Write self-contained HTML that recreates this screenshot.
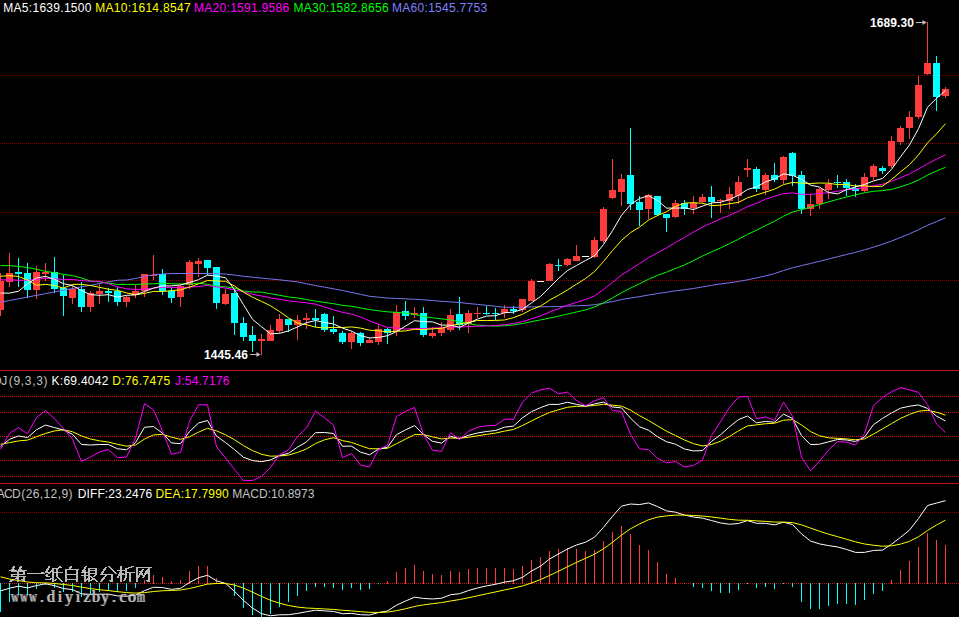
<!DOCTYPE html>
<html><head><meta charset="utf-8"><style>
html,body{margin:0;padding:0;background:#000;width:959px;height:617px;overflow:hidden;position:relative}
.lg{position:absolute;font-family:"Liberation Sans",sans-serif;font-size:12px;line-height:20px;white-space:pre}
</style></head><body>
<svg width="959" height="617" viewBox="0 0 959 617" style="position:absolute;left:0;top:0"><line x1="0" y1="75.5" x2="959" y2="75.5" stroke="#8c0000" stroke-width="1" stroke-dasharray="1 1"/><line x1="0" y1="143.5" x2="959" y2="143.5" stroke="#8c0000" stroke-width="1" stroke-dasharray="1 1"/><line x1="0" y1="212.5" x2="959" y2="212.5" stroke="#8c0000" stroke-width="1" stroke-dasharray="1 1"/><line x1="0" y1="280.5" x2="959" y2="280.5" stroke="#8c0000" stroke-width="1" stroke-dasharray="1 1"/><line x1="0" y1="396.5" x2="959" y2="396.5" stroke="#c81410" stroke-width="1" stroke-dasharray="1 1"/><line x1="0" y1="412.5" x2="959" y2="412.5" stroke="#c81410" stroke-width="1" stroke-dasharray="1 1"/><line x1="0" y1="436.5" x2="959" y2="436.5" stroke="#c81410" stroke-width="1" stroke-dasharray="1 1"/><line x1="0" y1="460.5" x2="959" y2="460.5" stroke="#c81410" stroke-width="1" stroke-dasharray="1 1"/><line x1="0" y1="476.5" x2="959" y2="476.5" stroke="#c81410" stroke-width="1" stroke-dasharray="1 1"/><line x1="0" y1="512.5" x2="959" y2="512.5" stroke="#8c0000" stroke-width="1" stroke-dasharray="1 1"/><line x1="0" y1="583.5" x2="959" y2="583.5" stroke="#c81410" stroke-width="1" stroke-dasharray="1 1"/><rect x="0" y="370" width="959" height="1" fill="#c81410"/><rect x="0" y="483" width="959" height="1" fill="#c81410"/><g shape-rendering="crispEdges"><rect x="0" y="273" width="1" height="43" fill="#ff3c3c"/><rect x="-3" y="281" width="7" height="29" fill="#ff3c3c"/><rect x="9" y="253" width="1" height="34" fill="#ff3c3c"/><rect x="6" y="273" width="7" height="9" fill="#ff3c3c"/><rect x="18" y="258" width="1" height="29" fill="#00ffff"/><rect x="15" y="272" width="7" height="2" fill="#00ffff"/><rect x="27" y="263" width="1" height="35" fill="#00ffff"/><rect x="24" y="273" width="7" height="17" fill="#00ffff"/><rect x="36" y="266" width="1" height="33" fill="#ff3c3c"/><rect x="33" y="272" width="7" height="18" fill="#ff3c3c"/><rect x="45" y="263" width="1" height="18" fill="#ff3c3c"/><rect x="42" y="272" width="7" height="2" fill="#ff3c3c"/><rect x="54" y="257" width="1" height="36" fill="#00ffff"/><rect x="51" y="272" width="7" height="17" fill="#00ffff"/><rect x="63" y="275" width="1" height="41" fill="#00ffff"/><rect x="60" y="288" width="7" height="8" fill="#00ffff"/><rect x="72" y="285" width="1" height="19" fill="#ff3c3c"/><rect x="69" y="289" width="7" height="9" fill="#ff3c3c"/><rect x="81" y="282" width="1" height="30" fill="#00ffff"/><rect x="78" y="289" width="7" height="18" fill="#00ffff"/><rect x="90" y="291" width="1" height="21" fill="#ff3c3c"/><rect x="87" y="293" width="7" height="14" fill="#ff3c3c"/><rect x="99" y="284" width="1" height="20" fill="#ff3c3c"/><rect x="96" y="291" width="7" height="3" fill="#ff3c3c"/><rect x="108" y="288" width="1" height="14" fill="#00ffff"/><rect x="105" y="291" width="7" height="2" fill="#00ffff"/><rect x="117" y="287" width="1" height="19" fill="#00ffff"/><rect x="114" y="291" width="7" height="11" fill="#00ffff"/><rect x="126" y="296" width="1" height="11" fill="#ff3c3c"/><rect x="123" y="297" width="7" height="5" fill="#ff3c3c"/><rect x="135" y="285" width="1" height="13" fill="#ff3c3c"/><rect x="132" y="291" width="7" height="4" fill="#ff3c3c"/><rect x="144" y="274" width="1" height="23" fill="#ff3c3c"/><rect x="141" y="274" width="7" height="17" fill="#ff3c3c"/><rect x="153" y="255" width="1" height="25" fill="#ff3c3c"/><rect x="150" y="275" width="7" height="1" fill="#ff3c3c"/><rect x="162" y="269" width="1" height="26" fill="#00ffff"/><rect x="159" y="274" width="7" height="17" fill="#00ffff"/><rect x="171" y="288" width="1" height="15" fill="#00ffff"/><rect x="168" y="291" width="7" height="7" fill="#00ffff"/><rect x="180" y="285" width="1" height="22" fill="#ff3c3c"/><rect x="177" y="286" width="7" height="11" fill="#ff3c3c"/><rect x="189" y="260" width="1" height="29" fill="#ff3c3c"/><rect x="186" y="262" width="7" height="23" fill="#ff3c3c"/><rect x="198" y="258" width="1" height="19" fill="#ff3c3c"/><rect x="195" y="261" width="7" height="3" fill="#ff3c3c"/><rect x="207" y="260" width="1" height="15" fill="#00ffff"/><rect x="204" y="260" width="7" height="8" fill="#00ffff"/><rect x="216" y="267" width="1" height="42" fill="#00ffff"/><rect x="213" y="267" width="7" height="36" fill="#00ffff"/><rect x="225" y="289" width="1" height="16" fill="#ff3c3c"/><rect x="222" y="294" width="7" height="10" fill="#ff3c3c"/><rect x="234" y="290" width="1" height="45" fill="#00ffff"/><rect x="231" y="293" width="7" height="30" fill="#00ffff"/><rect x="243" y="317" width="1" height="24" fill="#00ffff"/><rect x="240" y="323" width="7" height="14" fill="#00ffff"/><rect x="252" y="326" width="1" height="26" fill="#00ffff"/><rect x="249" y="335" width="7" height="6" fill="#00ffff"/><rect x="261" y="334" width="1" height="21" fill="#ff3c3c"/><rect x="258" y="339" width="7" height="2" fill="#ff3c3c"/><rect x="270" y="325" width="1" height="16" fill="#ff3c3c"/><rect x="267" y="330" width="7" height="11" fill="#ff3c3c"/><rect x="279" y="314" width="1" height="19" fill="#ff3c3c"/><rect x="276" y="319" width="7" height="12" fill="#ff3c3c"/><rect x="288" y="319" width="1" height="13" fill="#00ffff"/><rect x="285" y="319" width="7" height="6" fill="#00ffff"/><rect x="297" y="315" width="1" height="25" fill="#ff3c3c"/><rect x="294" y="320" width="7" height="5" fill="#ff3c3c"/><rect x="306" y="313" width="1" height="16" fill="#ff3c3c"/><rect x="303" y="318" width="7" height="2" fill="#ff3c3c"/><rect x="315" y="309" width="1" height="18" fill="#00ffff"/><rect x="312" y="318" width="7" height="2" fill="#00ffff"/><rect x="324" y="313" width="1" height="19" fill="#00ffff"/><rect x="321" y="314" width="7" height="16" fill="#00ffff"/><rect x="333" y="316" width="1" height="18" fill="#00ffff"/><rect x="330" y="329" width="7" height="3" fill="#00ffff"/><rect x="342" y="331" width="1" height="13" fill="#00ffff"/><rect x="339" y="333" width="7" height="9" fill="#00ffff"/><rect x="351" y="331" width="1" height="18" fill="#ff3c3c"/><rect x="348" y="333" width="7" height="9" fill="#ff3c3c"/><rect x="360" y="332" width="1" height="14" fill="#00ffff"/><rect x="357" y="333" width="7" height="10" fill="#00ffff"/><rect x="369" y="338" width="1" height="5" fill="#ff3c3c"/><rect x="366" y="340" width="7" height="3" fill="#ff3c3c"/><rect x="378" y="324" width="1" height="21" fill="#ff3c3c"/><rect x="375" y="329" width="7" height="13" fill="#ff3c3c"/><rect x="387" y="328" width="1" height="16" fill="#00ffff"/><rect x="384" y="329" width="7" height="4" fill="#00ffff"/><rect x="396" y="305" width="1" height="31" fill="#ff3c3c"/><rect x="393" y="312" width="7" height="19" fill="#ff3c3c"/><rect x="405" y="301" width="1" height="19" fill="#00ffff"/><rect x="402" y="311" width="7" height="5" fill="#00ffff"/><rect x="414" y="307" width="1" height="11" fill="#ff3c3c"/><rect x="411" y="313" width="7" height="2" fill="#ff3c3c"/><rect x="423" y="307" width="1" height="30" fill="#00ffff"/><rect x="420" y="313" width="7" height="22" fill="#00ffff"/><rect x="432" y="327" width="1" height="11" fill="#ff3c3c"/><rect x="429" y="333" width="7" height="3" fill="#ff3c3c"/><rect x="441" y="322" width="1" height="14" fill="#ff3c3c"/><rect x="438" y="328" width="7" height="5" fill="#ff3c3c"/><rect x="450" y="309" width="1" height="23" fill="#ff3c3c"/><rect x="447" y="315" width="7" height="15" fill="#ff3c3c"/><rect x="459" y="297" width="1" height="33" fill="#00ffff"/><rect x="456" y="314" width="7" height="11" fill="#00ffff"/><rect x="468" y="310" width="1" height="23" fill="#ff3c3c"/><rect x="465" y="313" width="7" height="11" fill="#ff3c3c"/><rect x="477" y="307" width="1" height="11" fill="#ff3c3c"/><rect x="474" y="313" width="7" height="1" fill="#ff3c3c"/><rect x="486" y="306" width="1" height="9" fill="#00ffff"/><rect x="483" y="313" width="7" height="1" fill="#00ffff"/><rect x="495" y="308" width="1" height="12" fill="#00ffff"/><rect x="492" y="313" width="7" height="1" fill="#00ffff"/><rect x="504" y="305" width="1" height="13" fill="#ff3c3c"/><rect x="501" y="309" width="7" height="4" fill="#ff3c3c"/><rect x="513" y="306" width="1" height="8" fill="#00ffff"/><rect x="510" y="309" width="7" height="2" fill="#00ffff"/><rect x="522" y="299" width="1" height="13" fill="#ff3c3c"/><rect x="519" y="299" width="7" height="11" fill="#ff3c3c"/><rect x="531" y="279" width="1" height="22" fill="#ff3c3c"/><rect x="528" y="281" width="7" height="20" fill="#ff3c3c"/><rect x="540" y="281" width="1" height="1" fill="#ffffff"/><rect x="537" y="281" width="7" height="1" fill="#ffffff"/><rect x="549" y="263" width="1" height="18" fill="#ff3c3c"/><rect x="546" y="264" width="7" height="17" fill="#ff3c3c"/><rect x="558" y="259" width="1" height="12" fill="#00ffff"/><rect x="555" y="265" width="7" height="1" fill="#00ffff"/><rect x="567" y="258" width="1" height="8" fill="#ff3c3c"/><rect x="564" y="259" width="7" height="6" fill="#ff3c3c"/><rect x="576" y="245" width="1" height="16" fill="#ff3c3c"/><rect x="573" y="256" width="7" height="5" fill="#ff3c3c"/><rect x="585" y="256" width="1" height="1" fill="#ffffff"/><rect x="582" y="256" width="7" height="1" fill="#ffffff"/><rect x="594" y="237" width="1" height="21" fill="#ff3c3c"/><rect x="591" y="240" width="7" height="17" fill="#ff3c3c"/><rect x="603" y="207" width="1" height="36" fill="#ff3c3c"/><rect x="600" y="209" width="7" height="32" fill="#ff3c3c"/><rect x="612" y="159" width="1" height="40" fill="#ff3c3c"/><rect x="609" y="190" width="7" height="8" fill="#ff3c3c"/><rect x="621" y="174" width="1" height="32" fill="#ff3c3c"/><rect x="618" y="179" width="7" height="13" fill="#ff3c3c"/><rect x="630" y="128" width="1" height="82" fill="#00ffff"/><rect x="627" y="175" width="7" height="29" fill="#00ffff"/><rect x="639" y="196" width="1" height="30" fill="#00ffff"/><rect x="636" y="202" width="7" height="8" fill="#00ffff"/><rect x="648" y="194" width="1" height="25" fill="#ff3c3c"/><rect x="645" y="195" width="7" height="14" fill="#ff3c3c"/><rect x="657" y="196" width="1" height="20" fill="#00ffff"/><rect x="654" y="196" width="7" height="19" fill="#00ffff"/><rect x="666" y="214" width="1" height="18" fill="#00ffff"/><rect x="663" y="214" width="7" height="4" fill="#00ffff"/><rect x="675" y="200" width="1" height="18" fill="#ff3c3c"/><rect x="672" y="203" width="7" height="14" fill="#ff3c3c"/><rect x="684" y="200" width="1" height="15" fill="#00ffff"/><rect x="681" y="203" width="7" height="6" fill="#00ffff"/><rect x="693" y="196" width="1" height="18" fill="#ff3c3c"/><rect x="690" y="203" width="7" height="5" fill="#ff3c3c"/><rect x="702" y="194" width="1" height="9" fill="#ff3c3c"/><rect x="699" y="197" width="7" height="5" fill="#ff3c3c"/><rect x="711" y="186" width="1" height="32" fill="#00ffff"/><rect x="708" y="197" width="7" height="5" fill="#00ffff"/><rect x="720" y="199" width="1" height="14" fill="#ff3c3c"/><rect x="717" y="200" width="7" height="1" fill="#ff3c3c"/><rect x="729" y="187" width="1" height="22" fill="#ff3c3c"/><rect x="726" y="194" width="7" height="7" fill="#ff3c3c"/><rect x="738" y="176" width="1" height="28" fill="#ff3c3c"/><rect x="735" y="182" width="7" height="14" fill="#ff3c3c"/><rect x="747" y="159" width="1" height="18" fill="#ff3c3c"/><rect x="744" y="168" width="7" height="2" fill="#ff3c3c"/><rect x="756" y="167" width="1" height="25" fill="#00ffff"/><rect x="753" y="169" width="7" height="20" fill="#00ffff"/><rect x="765" y="173" width="1" height="22" fill="#ff3c3c"/><rect x="762" y="175" width="7" height="15" fill="#ff3c3c"/><rect x="774" y="163" width="1" height="19" fill="#00ffff"/><rect x="771" y="175" width="7" height="5" fill="#00ffff"/><rect x="783" y="156" width="1" height="28" fill="#ff3c3c"/><rect x="780" y="157" width="7" height="23" fill="#ff3c3c"/><rect x="792" y="152" width="1" height="34" fill="#00ffff"/><rect x="789" y="153" width="7" height="23" fill="#00ffff"/><rect x="801" y="171" width="1" height="43" fill="#00ffff"/><rect x="798" y="175" width="7" height="34" fill="#00ffff"/><rect x="810" y="194" width="1" height="22" fill="#ff3c3c"/><rect x="807" y="204" width="7" height="5" fill="#ff3c3c"/><rect x="819" y="188" width="1" height="21" fill="#ff3c3c"/><rect x="816" y="189" width="7" height="15" fill="#ff3c3c"/><rect x="828" y="179" width="1" height="20" fill="#ff3c3c"/><rect x="825" y="184" width="7" height="6" fill="#ff3c3c"/><rect x="837" y="175" width="1" height="13" fill="#00ffff"/><rect x="834" y="182" width="7" height="1" fill="#00ffff"/><rect x="846" y="179" width="1" height="17" fill="#00ffff"/><rect x="843" y="182" width="7" height="6" fill="#00ffff"/><rect x="855" y="184" width="1" height="13" fill="#00ffff"/><rect x="852" y="188" width="7" height="3" fill="#00ffff"/><rect x="864" y="173" width="1" height="19" fill="#ff3c3c"/><rect x="861" y="177" width="7" height="14" fill="#ff3c3c"/><rect x="873" y="164" width="1" height="16" fill="#ff3c3c"/><rect x="870" y="166" width="7" height="11" fill="#ff3c3c"/><rect x="882" y="166" width="1" height="8" fill="#00ffff"/><rect x="879" y="168" width="7" height="3" fill="#00ffff"/><rect x="891" y="136" width="1" height="32" fill="#ff3c3c"/><rect x="888" y="141" width="7" height="25" fill="#ff3c3c"/><rect x="900" y="126" width="1" height="19" fill="#ff3c3c"/><rect x="897" y="128" width="7" height="14" fill="#ff3c3c"/><rect x="909" y="111" width="1" height="28" fill="#ff3c3c"/><rect x="906" y="117" width="7" height="11" fill="#ff3c3c"/><rect x="918" y="76" width="1" height="43" fill="#ff3c3c"/><rect x="915" y="85" width="7" height="32" fill="#ff3c3c"/><rect x="927" y="22" width="1" height="53" fill="#ff3c3c"/><rect x="924" y="63" width="7" height="11" fill="#ff3c3c"/><rect x="936" y="56" width="1" height="55" fill="#00ffff"/><rect x="933" y="63" width="7" height="34" fill="#00ffff"/><rect x="945" y="87" width="1" height="11" fill="#ff3c3c"/><rect x="942" y="89" width="7" height="7" fill="#ff3c3c"/></g><polyline fill="none" stroke="#7878f0" stroke-width="1" points="0.5,302.25 9.5,300.52 18.5,298.80 27.5,297.07 36.5,295.35 45.5,293.62 54.5,291.90 63.5,290.23 72.5,288.57 81.5,286.90 90.5,285.24 99.5,283.57 108.5,281.91 117.5,280.25 126.5,280.00 135.5,278.50 144.5,276.25 153.5,274.75 162.5,274.00 171.5,273.50 180.5,273.50 189.5,273.50 198.5,273.50 207.5,273.50 216.5,273.75 225.5,274.00 234.5,275.15 243.5,276.30 252.5,277.20 261.5,278.10 270.5,278.95 279.5,279.80 288.5,280.85 297.5,281.90 306.5,283.75 315.5,285.60 324.5,287.20 333.5,288.80 342.5,290.50 351.5,292.43 360.5,294.37 369.5,296.30 378.5,297.20 387.5,298.10 396.5,298.45 405.5,298.80 414.5,299.30 423.5,299.80 432.5,300.55 441.5,301.30 450.5,301.90 459.5,302.50 468.5,303.50 477.5,304.40 486.5,305.30 495.5,306.30 504.5,307.30 513.5,307.30 522.5,307.30 531.5,306.83 540.5,306.83 549.5,306.68 558.5,306.55 567.5,306.05 576.5,305.78 585.5,305.52 594.5,304.72 603.5,303.28 612.5,301.63 621.5,299.52 630.5,298.02 639.5,296.65 648.5,295.03 657.5,293.58 666.5,292.25 675.5,290.78 684.5,289.68 693.5,288.48 702.5,286.93 711.5,285.33 720.5,283.90 729.5,282.77 738.5,281.45 747.5,279.80 756.5,277.90 765.5,275.92 774.5,273.53 783.5,270.55 792.5,267.80 801.5,265.62 810.5,263.52 819.5,261.35 828.5,259.02 837.5,256.72 846.5,254.53 855.5,252.38 864.5,249.85 873.5,247.10 882.5,244.25 891.5,241.05 900.5,237.48 909.5,233.77 918.5,229.70 927.5,225.22 936.5,221.62 945.5,217.85"/><polyline fill="none" stroke="#00ff00" stroke-width="1" points="0.5,265.60 9.5,265.60 18.5,266.50 27.5,267.50 36.5,269.40 45.5,271.25 54.5,272.75 63.5,274.40 72.5,275.60 81.5,278.00 90.5,281.00 99.5,281.90 108.5,283.10 117.5,284.40 126.5,284.40 135.5,284.40 144.5,284.00 153.5,283.75 162.5,283.10 171.5,283.75 180.5,284.00 189.5,284.00 198.5,283.10 207.5,284.40 216.5,286.00 225.5,286.90 234.5,288.10 243.5,291.00 252.5,292.00 261.5,292.10 270.5,293.73 279.5,295.27 288.5,296.97 297.5,298.00 306.5,299.53 315.5,301.10 324.5,302.47 333.5,303.67 342.5,305.40 351.5,306.30 360.5,307.93 369.5,309.57 378.5,310.80 387.5,311.83 396.5,312.33 405.5,313.13 414.5,314.43 423.5,316.40 432.5,317.83 441.5,318.87 450.5,319.83 459.5,321.90 468.5,323.63 477.5,325.17 486.5,325.53 495.5,326.17 504.5,325.73 513.5,324.87 522.5,323.50 531.5,321.57 540.5,319.93 549.5,318.10 558.5,316.13 567.5,314.10 576.5,312.03 585.5,309.93 594.5,306.97 603.5,302.90 612.5,297.87 621.5,292.73 630.5,288.10 639.5,283.73 648.5,279.27 657.5,275.33 666.5,272.17 675.5,268.43 684.5,264.93 693.5,260.57 702.5,256.03 711.5,251.80 720.5,247.97 729.5,243.63 738.5,239.27 747.5,234.43 756.5,230.27 765.5,225.67 774.5,221.33 783.5,216.23 792.5,212.10 801.5,209.67 810.5,207.10 819.5,204.60 828.5,201.90 837.5,199.33 846.5,197.03 855.5,194.83 864.5,192.73 873.5,191.30 882.5,190.63 891.5,189.37 900.5,186.87 909.5,183.80 918.5,180.13 927.5,175.10 936.5,171.07 945.5,167.27"/><polyline fill="none" stroke="#ff00ff" stroke-width="1" points="0.5,279.75 9.5,280.00 18.5,280.25 27.5,280.25 36.5,279.40 45.5,278.10 54.5,279.00 63.5,279.40 72.5,279.40 81.5,280.60 90.5,281.25 99.5,281.25 108.5,283.75 117.5,286.90 126.5,288.75 135.5,289.40 144.5,289.10 153.5,288.10 162.5,287.25 171.5,287.45 180.5,287.70 189.5,287.15 198.5,286.55 207.5,285.45 216.5,286.95 225.5,288.05 234.5,289.75 243.5,291.80 252.5,294.35 261.5,296.00 270.5,297.85 279.5,299.25 288.5,300.85 297.5,301.80 306.5,302.85 315.5,304.25 324.5,307.00 333.5,309.80 342.5,312.35 351.5,314.15 360.5,316.95 369.5,320.85 378.5,324.25 387.5,327.50 396.5,328.00 405.5,329.05 414.5,328.60 423.5,328.50 432.5,328.15 441.5,327.60 450.5,326.85 459.5,327.10 468.5,326.55 477.5,326.20 486.5,325.95 495.5,325.65 504.5,324.65 513.5,323.60 522.5,321.50 531.5,318.90 540.5,315.85 549.5,312.05 558.5,308.85 567.5,305.20 576.5,302.40 585.5,299.45 594.5,295.80 603.5,289.55 612.5,282.40 621.5,274.95 630.5,269.35 639.5,263.60 648.5,257.70 657.5,252.75 666.5,247.95 675.5,242.45 684.5,237.40 693.5,232.05 702.5,226.95 711.5,222.95 720.5,218.90 729.5,215.40 738.5,211.25 747.5,206.70 756.5,203.30 765.5,199.25 774.5,196.20 783.5,193.60 792.5,192.85 801.5,194.30 810.5,194.35 819.5,193.35 828.5,192.80 837.5,191.20 846.5,189.70 855.5,189.05 864.5,187.50 873.5,185.65 882.5,184.30 891.5,181.30 900.5,177.70 909.5,173.85 918.5,169.00 927.5,163.75 936.5,159.15 945.5,154.85"/><polyline fill="none" stroke="#ffff00" stroke-width="1" points="0.5,276.25 9.5,275.60 18.5,276.50 27.5,280.00 36.5,285.25 45.5,284.40 54.5,285.60 63.5,288.10 72.5,284.40 81.5,284.30 90.5,285.50 99.5,287.30 108.5,289.20 117.5,290.40 126.5,292.90 135.5,294.80 144.5,293.40 153.5,291.40 162.5,291.50 171.5,290.60 180.5,289.90 189.5,287.00 198.5,283.90 207.5,280.50 216.5,281.00 225.5,281.30 234.5,286.10 243.5,292.20 252.5,297.20 261.5,301.40 270.5,305.80 279.5,311.50 288.5,317.80 297.5,323.10 306.5,324.70 315.5,327.20 324.5,327.90 333.5,327.40 342.5,327.50 351.5,326.90 360.5,328.10 369.5,330.20 378.5,330.70 387.5,331.90 396.5,331.30 405.5,330.90 414.5,329.30 423.5,329.60 432.5,328.80 441.5,328.30 450.5,325.60 459.5,324.00 468.5,322.40 477.5,320.50 486.5,320.60 495.5,320.40 504.5,320.00 513.5,317.60 522.5,314.20 531.5,309.50 540.5,306.10 549.5,300.10 558.5,295.30 567.5,289.90 576.5,284.20 585.5,278.50 594.5,271.60 603.5,261.50 612.5,250.60 621.5,240.40 630.5,232.60 639.5,227.10 648.5,220.10 657.5,215.60 666.5,211.70 675.5,206.40 684.5,203.20 693.5,202.60 702.5,203.30 711.5,205.50 720.5,205.20 729.5,203.70 738.5,202.40 747.5,197.80 756.5,194.90 765.5,192.10 774.5,189.20 783.5,184.60 792.5,182.40 801.5,183.10 810.5,183.50 819.5,183.00 828.5,183.20 837.5,184.60 846.5,184.50 855.5,186.00 864.5,185.80 873.5,186.70 882.5,186.20 891.5,179.50 900.5,171.90 909.5,164.70 918.5,154.80 927.5,142.90 936.5,133.80 945.5,123.70"/><polyline fill="none" stroke="#ffffff" stroke-width="1" points="0.5,293.10 9.5,293.10 18.5,291.25 27.5,283.75 36.5,278.10 45.5,276.30 54.5,279.30 63.5,283.70 72.5,285.60 81.5,290.50 90.5,294.70 99.5,295.30 108.5,294.70 117.5,297.10 126.5,295.30 135.5,294.90 144.5,291.50 153.5,288.10 162.5,285.90 171.5,285.90 180.5,284.90 189.5,282.50 198.5,279.70 207.5,275.10 216.5,276.10 225.5,277.70 234.5,289.70 243.5,304.70 252.5,319.30 261.5,326.70 270.5,333.90 279.5,333.30 288.5,330.90 297.5,326.90 306.5,322.70 315.5,320.50 324.5,322.50 333.5,323.90 342.5,328.10 351.5,331.10 360.5,335.70 369.5,337.90 378.5,337.50 387.5,335.70 396.5,331.50 405.5,326.10 414.5,320.70 423.5,321.70 432.5,321.90 441.5,325.10 450.5,325.10 459.5,327.30 468.5,323.10 477.5,319.10 486.5,316.10 495.5,315.70 504.5,312.70 513.5,312.10 522.5,309.30 531.5,302.90 540.5,296.50 549.5,287.50 558.5,278.50 567.5,270.50 576.5,265.50 585.5,260.50 594.5,255.70 603.5,244.50 612.5,230.70 621.5,215.30 630.5,204.70 639.5,198.50 648.5,195.70 657.5,200.50 666.5,208.10 675.5,208.10 684.5,207.90 693.5,209.50 702.5,206.10 711.5,202.90 720.5,202.30 729.5,199.50 738.5,195.30 747.5,189.50 756.5,186.90 765.5,181.90 774.5,178.90 783.5,173.90 792.5,175.30 801.5,179.30 810.5,185.10 819.5,187.10 828.5,192.50 837.5,193.90 846.5,189.70 855.5,186.90 864.5,184.50 873.5,180.90 882.5,178.50 891.5,169.30 900.5,156.90 909.5,144.90 918.5,128.70 927.5,107.30 936.5,98.30 945.5,90.50"/><rect x="250" y="354" width="10" height="1" fill="#c0c0c0"/><path d="M256.5 352 L260.5 354.5 L256.5 357 Z" fill="#c0c0c0"/><rect x="916" y="22" width="10" height="1" fill="#c0c0c0"/><path d="M922.5 20 L926.5 22.5 L922.5 25 Z" fill="#c0c0c0"/><svg x="0" y="371" width="959" height="112" viewBox="0 371 959 112" overflow="hidden"><polyline fill="none" stroke="#ffff00" points="0.5,444.27 9.5,442.60 18.5,440.93 27.5,440.10 36.5,436.76 45.5,433.42 54.5,430.92 63.5,429.75 72.5,431.75 81.5,435.99 90.5,439.00 99.5,440.83 108.5,442.08 117.5,444.32 126.5,446.13 135.5,444.97 144.5,439.07 153.5,434.90 162.5,434.33 171.5,437.19 180.5,439.35 189.5,436.77 198.5,432.19 207.5,428.28 216.5,430.90 225.5,434.78 234.5,439.73 243.5,445.59 252.5,450.57 261.5,454.28 270.5,456.18 279.5,455.97 288.5,455.09 297.5,452.43 306.5,448.92 315.5,443.51 324.5,439.84 333.5,437.73 342.5,440.58 351.5,442.42 360.5,445.66 369.5,448.70 378.5,448.81 387.5,448.29 396.5,443.75 405.5,439.13 414.5,434.61 423.5,434.61 432.5,436.84 441.5,438.93 450.5,438.04 459.5,438.24 468.5,437.25 477.5,435.84 486.5,434.40 495.5,433.10 504.5,431.12 513.5,429.44 522.5,425.54 531.5,420.91 540.5,416.48 549.5,412.45 558.5,409.77 567.5,407.26 576.5,406.30 585.5,406.22 594.5,405.47 603.5,404.33 612.5,405.21 621.5,406.10 630.5,410.13 639.5,415.66 648.5,420.50 657.5,425.91 666.5,431.18 675.5,435.52 684.5,440.01 693.5,443.65 702.5,445.98 711.5,444.48 720.5,441.25 729.5,436.42 738.5,430.81 747.5,425.88 756.5,424.87 765.5,423.72 774.5,423.25 783.5,420.22 792.5,419.64 801.5,424.97 810.5,431.52 819.5,435.75 828.5,437.79 837.5,438.34 846.5,438.87 855.5,439.77 864.5,438.88 873.5,434.13 882.5,428.88 891.5,423.57 900.5,418.45 909.5,414.36 918.5,411.22 927.5,410.29 936.5,412.23 945.5,415.14"/><polyline fill="none" stroke="#ffffff" points="0.5,446.78 9.5,439.27 18.5,435.93 27.5,437.60 36.5,429.75 45.5,425.08 54.5,427.58 63.5,430.08 72.5,434.26 81.5,444.47 90.5,445.03 99.5,444.49 108.5,444.58 117.5,448.78 126.5,449.75 135.5,442.66 144.5,427.28 153.5,426.54 162.5,433.19 171.5,442.92 180.5,443.66 189.5,431.60 198.5,423.04 207.5,420.47 216.5,436.12 225.5,442.54 234.5,449.65 243.5,457.30 252.5,460.54 261.5,461.70 270.5,459.96 279.5,455.55 288.5,453.34 297.5,447.11 306.5,441.91 315.5,432.70 324.5,432.48 333.5,433.53 342.5,446.28 351.5,446.10 360.5,452.13 369.5,454.78 378.5,449.03 387.5,447.25 396.5,434.67 405.5,429.89 414.5,425.57 423.5,434.60 432.5,441.30 441.5,443.11 450.5,436.25 459.5,438.66 468.5,435.27 477.5,433.01 486.5,431.51 495.5,430.51 504.5,427.17 513.5,426.07 522.5,417.74 531.5,411.66 540.5,407.62 549.5,404.39 558.5,404.42 567.5,402.22 576.5,404.39 585.5,406.07 594.5,403.96 603.5,402.05 612.5,406.97 621.5,407.89 630.5,418.18 639.5,426.72 648.5,430.18 657.5,436.73 666.5,441.72 675.5,444.19 684.5,449.01 693.5,450.92 702.5,450.64 711.5,441.49 720.5,434.79 729.5,426.77 738.5,419.59 747.5,416.03 756.5,422.85 765.5,421.42 774.5,422.31 783.5,414.14 792.5,418.49 801.5,435.64 810.5,444.60 819.5,444.23 828.5,441.86 837.5,439.44 846.5,439.94 855.5,441.55 864.5,437.11 873.5,424.62 882.5,418.38 891.5,412.94 900.5,408.20 909.5,406.18 918.5,404.96 927.5,408.42 936.5,416.12 945.5,420.96"/><polyline fill="none" stroke="#ff00ff" points="0.5,449.28 9.5,433.42 18.5,427.58 27.5,433.76 36.5,417.56 45.5,410.55 54.5,418.73 63.5,428.41 72.5,439.27 81.5,461.42 90.5,457.08 99.5,451.79 108.5,449.58 117.5,457.72 126.5,456.99 135.5,438.05 144.5,403.68 153.5,409.83 162.5,430.92 171.5,454.38 180.5,452.28 189.5,421.27 198.5,404.73 207.5,404.83 216.5,446.58 225.5,458.06 234.5,469.48 243.5,480.72 252.5,480.49 261.5,476.53 270.5,467.54 279.5,454.71 288.5,449.83 297.5,436.47 306.5,427.87 315.5,411.06 324.5,417.78 333.5,425.11 342.5,457.68 351.5,453.45 360.5,465.07 369.5,466.95 378.5,449.47 387.5,445.16 396.5,416.52 405.5,411.41 414.5,407.49 423.5,434.59 432.5,450.21 441.5,451.47 450.5,432.69 459.5,439.48 468.5,431.31 477.5,427.36 486.5,425.74 495.5,425.32 504.5,419.27 513.5,419.33 522.5,402.14 531.5,393.17 540.5,389.89 549.5,388.26 558.5,393.72 567.5,392.15 576.5,400.56 585.5,405.77 594.5,400.95 603.5,397.49 612.5,410.50 621.5,411.46 630.5,434.28 639.5,448.84 648.5,449.54 657.5,458.37 666.5,462.80 675.5,461.54 684.5,466.99 693.5,465.47 702.5,459.97 711.5,435.49 720.5,421.86 729.5,407.45 738.5,397.14 747.5,396.32 756.5,418.81 765.5,416.83 774.5,420.43 783.5,402.00 792.5,416.18 801.5,456.97 810.5,470.78 819.5,461.18 828.5,450.01 837.5,441.64 846.5,442.08 855.5,445.11 864.5,433.58 873.5,405.61 882.5,397.39 891.5,391.69 900.5,387.71 909.5,389.83 918.5,392.42 927.5,404.68 936.5,423.90 945.5,432.60"/></svg><g shape-rendering="crispEdges"><rect x="0" y="583" width="1" height="29" fill="#00ffff"/><rect x="9" y="583" width="1" height="19" fill="#00ffff"/><rect x="18" y="583" width="1" height="12" fill="#00ffff"/><rect x="27" y="583" width="1" height="12" fill="#00ffff"/><rect x="36" y="583" width="1" height="6" fill="#00ffff"/><rect x="45" y="583" width="1" height="2" fill="#00ffff"/><rect x="54" y="583" width="1" height="5" fill="#00ffff"/><rect x="63" y="583" width="1" height="9" fill="#00ffff"/><rect x="72" y="583" width="1" height="9" fill="#00ffff"/><rect x="81" y="583" width="1" height="14" fill="#00ffff"/><rect x="90" y="583" width="1" height="12" fill="#00ffff"/><rect x="99" y="583" width="1" height="9" fill="#00ffff"/><rect x="108" y="583" width="1" height="8" fill="#00ffff"/><rect x="117" y="583" width="1" height="9" fill="#00ffff"/><rect x="126" y="583" width="1" height="8" fill="#00ffff"/><rect x="135" y="583" width="1" height="5" fill="#00ffff"/><rect x="144" y="580" width="1" height="4" fill="#ff3c3c"/><rect x="153" y="575" width="1" height="9" fill="#ff3c3c"/><rect x="162" y="577" width="1" height="7" fill="#ff3c3c"/><rect x="171" y="581" width="1" height="3" fill="#ff3c3c"/><rect x="180" y="580" width="1" height="4" fill="#ff3c3c"/><rect x="189" y="571" width="1" height="13" fill="#ff3c3c"/><rect x="198" y="566" width="1" height="18" fill="#ff3c3c"/><rect x="207" y="566" width="1" height="18" fill="#ff3c3c"/><rect x="216" y="578" width="1" height="6" fill="#ff3c3c"/><rect x="225" y="583" width="1" height="1" fill="#ff3c3c"/><rect x="234" y="583" width="1" height="13" fill="#00ffff"/><rect x="243" y="583" width="1" height="25" fill="#00ffff"/><rect x="252" y="583" width="1" height="32" fill="#00ffff"/><rect x="261" y="583" width="1" height="35" fill="#00ffff"/><rect x="270" y="583" width="1" height="31" fill="#00ffff"/><rect x="279" y="583" width="1" height="24" fill="#00ffff"/><rect x="288" y="583" width="1" height="19" fill="#00ffff"/><rect x="297" y="583" width="1" height="13" fill="#00ffff"/><rect x="306" y="583" width="1" height="8" fill="#00ffff"/><rect x="315" y="583" width="1" height="4" fill="#00ffff"/><rect x="324" y="583" width="1" height="4" fill="#00ffff"/><rect x="333" y="583" width="1" height="5" fill="#00ffff"/><rect x="342" y="583" width="1" height="7" fill="#00ffff"/><rect x="351" y="583" width="1" height="5" fill="#00ffff"/><rect x="360" y="583" width="1" height="7" fill="#00ffff"/><rect x="369" y="583" width="1" height="6" fill="#00ffff"/><rect x="378" y="583" width="1" height="1" fill="#00ffff"/><rect x="387" y="581" width="1" height="3" fill="#ff3c3c"/><rect x="396" y="572" width="1" height="12" fill="#ff3c3c"/><rect x="405" y="568" width="1" height="16" fill="#ff3c3c"/><rect x="414" y="565" width="1" height="19" fill="#ff3c3c"/><rect x="423" y="571" width="1" height="13" fill="#ff3c3c"/><rect x="432" y="574" width="1" height="10" fill="#ff3c3c"/><rect x="441" y="575" width="1" height="9" fill="#ff3c3c"/><rect x="450" y="571" width="1" height="13" fill="#ff3c3c"/><rect x="459" y="572" width="1" height="12" fill="#ff3c3c"/><rect x="468" y="569" width="1" height="15" fill="#ff3c3c"/><rect x="477" y="568" width="1" height="16" fill="#ff3c3c"/><rect x="486" y="568" width="1" height="16" fill="#ff3c3c"/><rect x="495" y="568" width="1" height="16" fill="#ff3c3c"/><rect x="504" y="568" width="1" height="16" fill="#ff3c3c"/><rect x="513" y="569" width="1" height="15" fill="#ff3c3c"/><rect x="522" y="566" width="1" height="18" fill="#ff3c3c"/><rect x="531" y="560" width="1" height="24" fill="#ff3c3c"/><rect x="540" y="557" width="1" height="27" fill="#ff3c3c"/><rect x="549" y="551" width="1" height="33" fill="#ff3c3c"/><rect x="558" y="549" width="1" height="35" fill="#ff3c3c"/><rect x="567" y="548" width="1" height="36" fill="#ff3c3c"/><rect x="576" y="549" width="1" height="35" fill="#ff3c3c"/><rect x="585" y="551" width="1" height="33" fill="#ff3c3c"/><rect x="594" y="550" width="1" height="34" fill="#ff3c3c"/><rect x="603" y="541" width="1" height="43" fill="#ff3c3c"/><rect x="612" y="532" width="1" height="52" fill="#ff3c3c"/><rect x="621" y="526" width="1" height="58" fill="#ff3c3c"/><rect x="630" y="534" width="1" height="50" fill="#ff3c3c"/><rect x="639" y="545" width="1" height="39" fill="#ff3c3c"/><rect x="648" y="550" width="1" height="34" fill="#ff3c3c"/><rect x="657" y="562" width="1" height="22" fill="#ff3c3c"/><rect x="666" y="574" width="1" height="10" fill="#ff3c3c"/><rect x="675" y="578" width="1" height="6" fill="#ff3c3c"/><rect x="684" y="583" width="1" height="1" fill="#ff3c3c"/><rect x="693" y="583" width="1" height="4" fill="#00ffff"/><rect x="702" y="583" width="1" height="5" fill="#00ffff"/><rect x="711" y="583" width="1" height="8" fill="#00ffff"/><rect x="720" y="583" width="1" height="10" fill="#00ffff"/><rect x="729" y="583" width="1" height="10" fill="#00ffff"/><rect x="738" y="583" width="1" height="7" fill="#00ffff"/><rect x="747" y="583" width="1" height="1" fill="#00ffff"/><rect x="756" y="583" width="1" height="5" fill="#00ffff"/><rect x="765" y="583" width="1" height="4" fill="#00ffff"/><rect x="774" y="583" width="1" height="6" fill="#00ffff"/><rect x="783" y="583" width="1" height="1" fill="#00ffff"/><rect x="792" y="583" width="1" height="4" fill="#00ffff"/><rect x="801" y="583" width="1" height="19" fill="#00ffff"/><rect x="810" y="583" width="1" height="26" fill="#00ffff"/><rect x="819" y="583" width="1" height="26" fill="#00ffff"/><rect x="828" y="583" width="1" height="23" fill="#00ffff"/><rect x="837" y="583" width="1" height="21" fill="#00ffff"/><rect x="846" y="583" width="1" height="21" fill="#00ffff"/><rect x="855" y="583" width="1" height="22" fill="#00ffff"/><rect x="864" y="583" width="1" height="17" fill="#00ffff"/><rect x="873" y="583" width="1" height="11" fill="#00ffff"/><rect x="882" y="583" width="1" height="8" fill="#00ffff"/><rect x="891" y="580" width="1" height="4" fill="#ff3c3c"/><rect x="900" y="570" width="1" height="14" fill="#ff3c3c"/><rect x="909" y="561" width="1" height="23" fill="#ff3c3c"/><rect x="918" y="547" width="1" height="37" fill="#ff3c3c"/><rect x="927" y="533" width="1" height="51" fill="#ff3c3c"/><rect x="936" y="540" width="1" height="44" fill="#ff3c3c"/><rect x="945" y="545" width="1" height="39" fill="#ff3c3c"/></g><polyline fill="none" stroke="#ffffff" points="0.5,590.86 9.5,588.27 18.5,586.19 27.5,587.86 36.5,585.58 45.5,583.77 54.5,585.67 63.5,588.60 72.5,589.59 81.5,593.84 90.5,594.34 99.5,594.19 108.5,594.16 117.5,595.89 126.5,596.27 135.5,595.17 144.5,590.64 153.5,587.22 162.5,587.61 171.5,589.34 180.5,588.33 189.5,582.49 198.5,577.71 207.5,575.29 216.5,580.77 225.5,583.43 234.5,591.35 243.5,600.38 252.5,608.09 261.5,613.65 270.5,615.78 279.5,614.80 288.5,614.71 297.5,613.45 306.5,611.71 315.5,610.23 324.5,610.85 333.5,611.44 342.5,613.66 351.5,613.40 360.5,614.73 369.5,614.99 378.5,612.55 387.5,610.93 396.5,605.19 405.5,601.06 414.5,597.21 423.5,598.42 432.5,598.98 441.5,598.20 450.5,594.72 459.5,593.74 468.5,590.56 477.5,587.99 486.5,585.93 495.5,584.28 504.5,582.15 513.5,580.70 522.5,577.31 531.5,570.98 540.5,566.16 549.5,559.04 558.5,553.94 567.5,549.04 576.5,544.97 585.5,542.22 594.5,537.20 603.5,527.34 612.5,516.30 621.5,506.12 630.5,504.03 639.5,504.55 648.5,502.93 657.5,506.55 666.5,510.88 675.5,512.18 684.5,515.06 693.5,517.05 702.5,518.12 711.5,520.54 720.5,522.94 729.5,524.26 738.5,523.47 747.5,520.63 756.5,523.28 765.5,523.33 774.5,524.89 783.5,522.20 792.5,524.54 801.5,533.92 810.5,541.00 819.5,543.90 828.5,545.59 837.5,546.93 846.5,549.43 855.5,552.41 864.5,552.39 873.5,550.44 882.5,550.12 891.5,544.21 900.5,537.32 909.5,530.15 918.5,518.48 927.5,505.50 936.5,503.09 945.5,500.66"/><polyline fill="none" stroke="#ffff00" points="0.5,576.78 9.5,579.08 18.5,580.50 27.5,581.97 36.5,582.69 45.5,582.91 54.5,583.46 63.5,584.49 72.5,585.51 81.5,587.17 90.5,588.61 99.5,589.72 108.5,590.61 117.5,591.67 126.5,592.59 135.5,593.10 144.5,592.61 153.5,591.53 162.5,590.75 171.5,590.47 180.5,590.04 189.5,588.53 198.5,586.37 207.5,584.15 216.5,583.47 225.5,583.47 234.5,585.04 243.5,588.11 252.5,592.11 261.5,596.41 270.5,600.29 279.5,603.19 288.5,605.49 297.5,607.09 306.5,608.01 315.5,608.45 324.5,608.93 333.5,609.43 342.5,610.28 351.5,610.90 360.5,611.67 369.5,612.33 378.5,612.38 387.5,612.09 396.5,610.71 405.5,608.78 414.5,606.46 423.5,604.85 432.5,603.68 441.5,602.58 450.5,601.01 459.5,599.56 468.5,597.76 477.5,595.80 486.5,593.83 495.5,591.92 504.5,589.97 513.5,588.11 522.5,585.95 531.5,582.96 540.5,579.60 549.5,575.49 558.5,571.18 567.5,566.75 576.5,562.39 585.5,558.36 594.5,554.13 603.5,548.77 612.5,542.28 621.5,535.05 630.5,528.84 639.5,523.98 648.5,519.77 657.5,517.13 666.5,515.88 675.5,515.14 684.5,515.12 693.5,515.51 702.5,516.03 711.5,516.93 720.5,518.14 729.5,519.36 738.5,520.18 747.5,520.27 756.5,520.87 765.5,521.36 774.5,522.07 783.5,522.10 792.5,522.58 801.5,524.85 810.5,528.08 819.5,531.25 828.5,534.11 837.5,536.68 846.5,539.23 855.5,541.87 864.5,543.97 873.5,545.26 882.5,546.23 891.5,545.83 900.5,544.13 909.5,541.33 918.5,536.76 927.5,530.51 936.5,525.03 945.5,520.15"/><g fill="none" stroke="#b9b9b9" stroke-width="1" shape-rendering="crispEdges" stroke-linecap="square"><polyline points="13.5,566.5 12.5,568.5 10.5,570.5"/><polyline points="9.5,570.5 15.5,570.5"/><polyline points="13.5,569.5 14.5,570.5"/><polyline points="20.5,566.5 19.5,568.5 18.5,570.5"/><polyline points="18.5,570.5 25.5,570.5"/><polyline points="20.5,569.5 21.5,570.5"/><polyline points="11.5,571.5 23.5,571.5"/><polyline points="23.5,571.5 23.5,574.5"/><polyline points="11.5,574.5 23.5,574.5"/><polyline points="11.5,574.5 11.5,576.5"/><polyline points="11.5,576.5 24.5,576.5"/><polyline points="23.5,576.5 23.5,580.5 21.5,579.5"/><polyline points="17.5,571.5 17.5,581.5"/><polyline points="16.5,577.5 14.5,579.5 11.5,580.5 9.5,581.5"/><polyline points="14.5,566.5 13.5,568.5 11.5,570.5"/><polyline points="10.5,570.5 16.5,570.5"/><polyline points="14.5,569.5 15.5,570.5"/><polyline points="21.5,566.5 20.5,568.5 19.5,570.5"/><polyline points="19.5,570.5 26.5,570.5"/><polyline points="21.5,569.5 22.5,570.5"/><polyline points="12.5,571.5 24.5,571.5"/><polyline points="24.5,571.5 24.5,574.5"/><polyline points="12.5,574.5 24.5,574.5"/><polyline points="12.5,574.5 12.5,576.5"/><polyline points="12.5,576.5 25.5,576.5"/><polyline points="24.5,576.5 24.5,580.5 22.5,579.5"/><polyline points="18.5,571.5 18.5,581.5"/><polyline points="17.5,577.5 15.5,579.5 12.5,580.5 10.5,581.5"/><polyline points="27.5,573.5 43.5,573.5"/><polyline points="41.5,572.5 42.5,572.5"/><polyline points="28.5,573.5 44.5,573.5"/><polyline points="42.5,572.5 43.5,572.5"/><polyline points="48.5,566.5 48.5,567.5 47.5,568.5 46.5,570.5 45.5,572.5"/><polyline points="45.5,572.5 47.5,572.5"/><polyline points="51.5,570.5 49.5,572.5 47.5,574.5 45.5,575.5"/><polyline points="46.5,576.5 48.5,576.5"/><polyline points="45.5,579.5 48.5,579.5 51.5,578.5"/><polyline points="52.5,568.5 52.5,581.5"/><polyline points="52.5,568.5 57.5,568.5 59.5,566.5 60.5,567.5"/><polyline points="56.5,568.5 56.5,576.5"/><polyline points="52.5,572.5 61.5,572.5"/><polyline points="57.5,577.5 59.5,579.5 61.5,581.5"/><polyline points="52.5,581.5 55.5,579.5"/><polyline points="49.5,566.5 49.5,567.5 48.5,568.5 47.5,570.5 46.5,572.5"/><polyline points="46.5,572.5 48.5,572.5"/><polyline points="52.5,570.5 50.5,572.5 48.5,574.5 46.5,575.5"/><polyline points="47.5,576.5 49.5,576.5"/><polyline points="46.5,579.5 49.5,579.5 52.5,578.5"/><polyline points="53.5,568.5 53.5,581.5"/><polyline points="53.5,568.5 58.5,568.5 60.5,566.5 61.5,567.5"/><polyline points="57.5,568.5 57.5,576.5"/><polyline points="53.5,572.5 62.5,572.5"/><polyline points="58.5,577.5 60.5,579.5 62.5,581.5"/><polyline points="53.5,581.5 56.5,579.5"/><polyline points="65.5,569.5 65.5,581.5"/><polyline points="76.5,569.5 76.5,581.5"/><polyline points="65.5,569.5 77.5,569.5"/><polyline points="65.5,574.5 76.5,574.5"/><polyline points="65.5,579.5 76.5,579.5"/><polyline points="70.5,566.5 69.5,568.5"/><polyline points="66.5,569.5 66.5,581.5"/><polyline points="77.5,569.5 77.5,581.5"/><polyline points="66.5,569.5 78.5,569.5"/><polyline points="66.5,574.5 77.5,574.5"/><polyline points="66.5,579.5 77.5,579.5"/><polyline points="71.5,566.5 70.5,568.5"/><polyline points="85.5,566.5 83.5,569.5 81.5,572.5"/><polyline points="81.5,572.5 86.5,572.5"/><polyline points="81.5,575.5 87.5,575.5"/><polyline points="84.5,570.5 84.5,581.5"/><polyline points="84.5,581.5 87.5,578.5"/><polyline points="88.5,568.5 88.5,581.5"/><polyline points="88.5,568.5 95.5,568.5"/><polyline points="95.5,568.5 95.5,573.5"/><polyline points="88.5,570.5 95.5,570.5"/><polyline points="88.5,573.5 95.5,573.5"/><polyline points="88.5,581.5 91.5,579.5"/><polyline points="90.5,576.5 96.5,581.5"/><polyline points="95.5,574.5 93.5,576.5"/><polyline points="86.5,566.5 84.5,569.5 82.5,572.5"/><polyline points="82.5,572.5 87.5,572.5"/><polyline points="82.5,575.5 88.5,575.5"/><polyline points="85.5,570.5 85.5,581.5"/><polyline points="85.5,581.5 88.5,578.5"/><polyline points="89.5,568.5 89.5,581.5"/><polyline points="89.5,568.5 96.5,568.5"/><polyline points="96.5,568.5 96.5,573.5"/><polyline points="89.5,570.5 96.5,570.5"/><polyline points="89.5,573.5 96.5,573.5"/><polyline points="89.5,581.5 92.5,579.5"/><polyline points="91.5,576.5 97.5,581.5"/><polyline points="96.5,574.5 94.5,576.5"/><polyline points="105.5,567.5 100.5,574.5"/><polyline points="108.5,566.5 115.5,573.5"/><polyline points="102.5,574.5 111.5,574.5"/><polyline points="111.5,574.5 111.5,581.5 109.5,580.5"/><polyline points="105.5,575.5 100.5,581.5"/><polyline points="106.5,567.5 101.5,574.5"/><polyline points="109.5,566.5 116.5,573.5"/><polyline points="103.5,574.5 112.5,574.5"/><polyline points="112.5,574.5 112.5,581.5 110.5,580.5"/><polyline points="106.5,575.5 101.5,581.5"/><polyline points="117.5,570.5 123.5,570.5"/><polyline points="120.5,566.5 120.5,581.5"/><polyline points="119.5,572.5 117.5,577.5"/><polyline points="121.5,573.5 123.5,574.5"/><polyline points="132.5,566.5 126.5,568.5"/><polyline points="125.5,568.5 125.5,577.5 123.5,580.5"/><polyline points="125.5,572.5 133.5,572.5"/><polyline points="129.5,572.5 129.5,581.5"/><polyline points="118.5,570.5 124.5,570.5"/><polyline points="121.5,566.5 121.5,581.5"/><polyline points="120.5,572.5 118.5,577.5"/><polyline points="122.5,573.5 124.5,574.5"/><polyline points="133.5,566.5 127.5,568.5"/><polyline points="126.5,568.5 126.5,577.5 124.5,580.5"/><polyline points="126.5,572.5 134.5,572.5"/><polyline points="130.5,572.5 130.5,581.5"/><polyline points="136.5,567.5 136.5,581.5"/><polyline points="136.5,567.5 150.5,567.5"/><polyline points="148.5,567.5 148.5,581.5 146.5,580.5"/><polyline points="142.5,569.5 137.5,577.5"/><polyline points="139.5,571.5 142.5,575.5"/><polyline points="147.5,569.5 142.5,577.5"/><polyline points="145.5,571.5 148.5,574.5"/><polyline points="137.5,567.5 137.5,581.5"/><polyline points="137.5,567.5 151.5,567.5"/><polyline points="149.5,567.5 149.5,581.5 147.5,580.5"/><polyline points="143.5,569.5 138.5,577.5"/><polyline points="140.5,571.5 143.5,575.5"/><polyline points="148.5,569.5 143.5,577.5"/><polyline points="146.5,571.5 149.5,574.5"/></g><g font-family="Liberation Serif, serif" font-size="16" fill="#b9b9b9"><text x="10.5" y="602" textLength="8" lengthAdjust="spacingAndGlyphs">w</text><text x="19.5" y="602" textLength="8" lengthAdjust="spacingAndGlyphs">w</text><text x="28.5" y="602" textLength="8" lengthAdjust="spacingAndGlyphs">w</text><text x="41.5" y="602" text-anchor="middle">.</text><text x="50.5" y="602" text-anchor="middle">d</text><text x="59.5" y="602" text-anchor="middle">i</text><text x="68.5" y="602" text-anchor="middle">y</text><text x="77.5" y="602" text-anchor="middle">i</text><text x="86.5" y="602" text-anchor="middle">z</text><text x="95.5" y="602" text-anchor="middle">b</text><text x="104.5" y="602" text-anchor="middle">y</text><text x="113.5" y="602" text-anchor="middle">.</text><text x="122.5" y="602" text-anchor="middle">c</text><text x="131.5" y="602" text-anchor="middle">o</text><text x="136.5" y="602" textLength="8" lengthAdjust="spacingAndGlyphs">m</text><text x="11.5" y="602" textLength="8" lengthAdjust="spacingAndGlyphs">w</text><text x="20.5" y="602" textLength="8" lengthAdjust="spacingAndGlyphs">w</text><text x="29.5" y="602" textLength="8" lengthAdjust="spacingAndGlyphs">w</text><text x="42.5" y="602" text-anchor="middle">.</text><text x="51.5" y="602" text-anchor="middle">d</text><text x="60.5" y="602" text-anchor="middle">i</text><text x="69.5" y="602" text-anchor="middle">y</text><text x="78.5" y="602" text-anchor="middle">i</text><text x="87.5" y="602" text-anchor="middle">z</text><text x="96.5" y="602" text-anchor="middle">b</text><text x="105.5" y="602" text-anchor="middle">y</text><text x="114.5" y="602" text-anchor="middle">.</text><text x="123.5" y="602" text-anchor="middle">c</text><text x="132.5" y="602" text-anchor="middle">o</text><text x="137.5" y="602" textLength="8" lengthAdjust="spacingAndGlyphs">m</text></g></svg>
<div class="lg" style="left:3.25px;top:-2px;color:#ffffff;letter-spacing:0.29px">MA5:1639.1500</div><div class="lg" style="left:95.25px;top:-2px;color:#ffff00;letter-spacing:0.3px">MA10:1614.8547</div><div class="lg" style="left:194px;top:-2px;color:#ff00ff;letter-spacing:0.29px">MA20:1591.9586</div><div class="lg" style="left:293.5px;top:-2px;color:#00ff00;letter-spacing:0.29px">MA30:1582.8656</div><div class="lg" style="left:392px;top:-2px;color:#8080ff;letter-spacing:0.29px">MA60:1545.7753</div><div class="lg" style="left:-14.4px;top:371px;color:#c0c0c0;letter-spacing:-0.5px">KDJ</div><div class="lg" style="left:8.8px;top:371px;color:#c0c0c0;letter-spacing:0.67px">(9,3,3)</div><div class="lg" style="left:51.5px;top:371px;color:#ffffff;letter-spacing:0.28px">K:69.4042</div><div class="lg" style="left:112.3px;top:371px;color:#ffff00;letter-spacing:0.3px">D:76.7475</div><div class="lg" style="left:175px;top:371px;color:#ff00ff;letter-spacing:0.22px">J:54.7176</div><div class="lg" style="left:-12.5px;top:484px;color:#c0c0c0;letter-spacing:-0.7px">MACD</div><div class="lg" style="left:21.25px;top:484px;color:#c0c0c0;letter-spacing:0.4px">(26,12,9)</div><div class="lg" style="left:77.8px;top:484px;color:#ffffff;letter-spacing:0.09px">DIFF:23.2476</div><div class="lg" style="left:155.5px;top:484px;color:#ffff00;letter-spacing:0.18px">DEA:17.7990</div><div class="lg" style="left:232.3px;top:484px;color:#c0c0c0;letter-spacing:0.0px">MACD:10.8973</div><div class="lg" style="left:204px;top:345px;color:#fff;font-weight:bold;letter-spacing:0.1px">1445.46</div><div class="lg" style="left:870px;top:13px;color:#fff;font-weight:bold;letter-spacing:0.1px">1689.30</div>
</body></html>
